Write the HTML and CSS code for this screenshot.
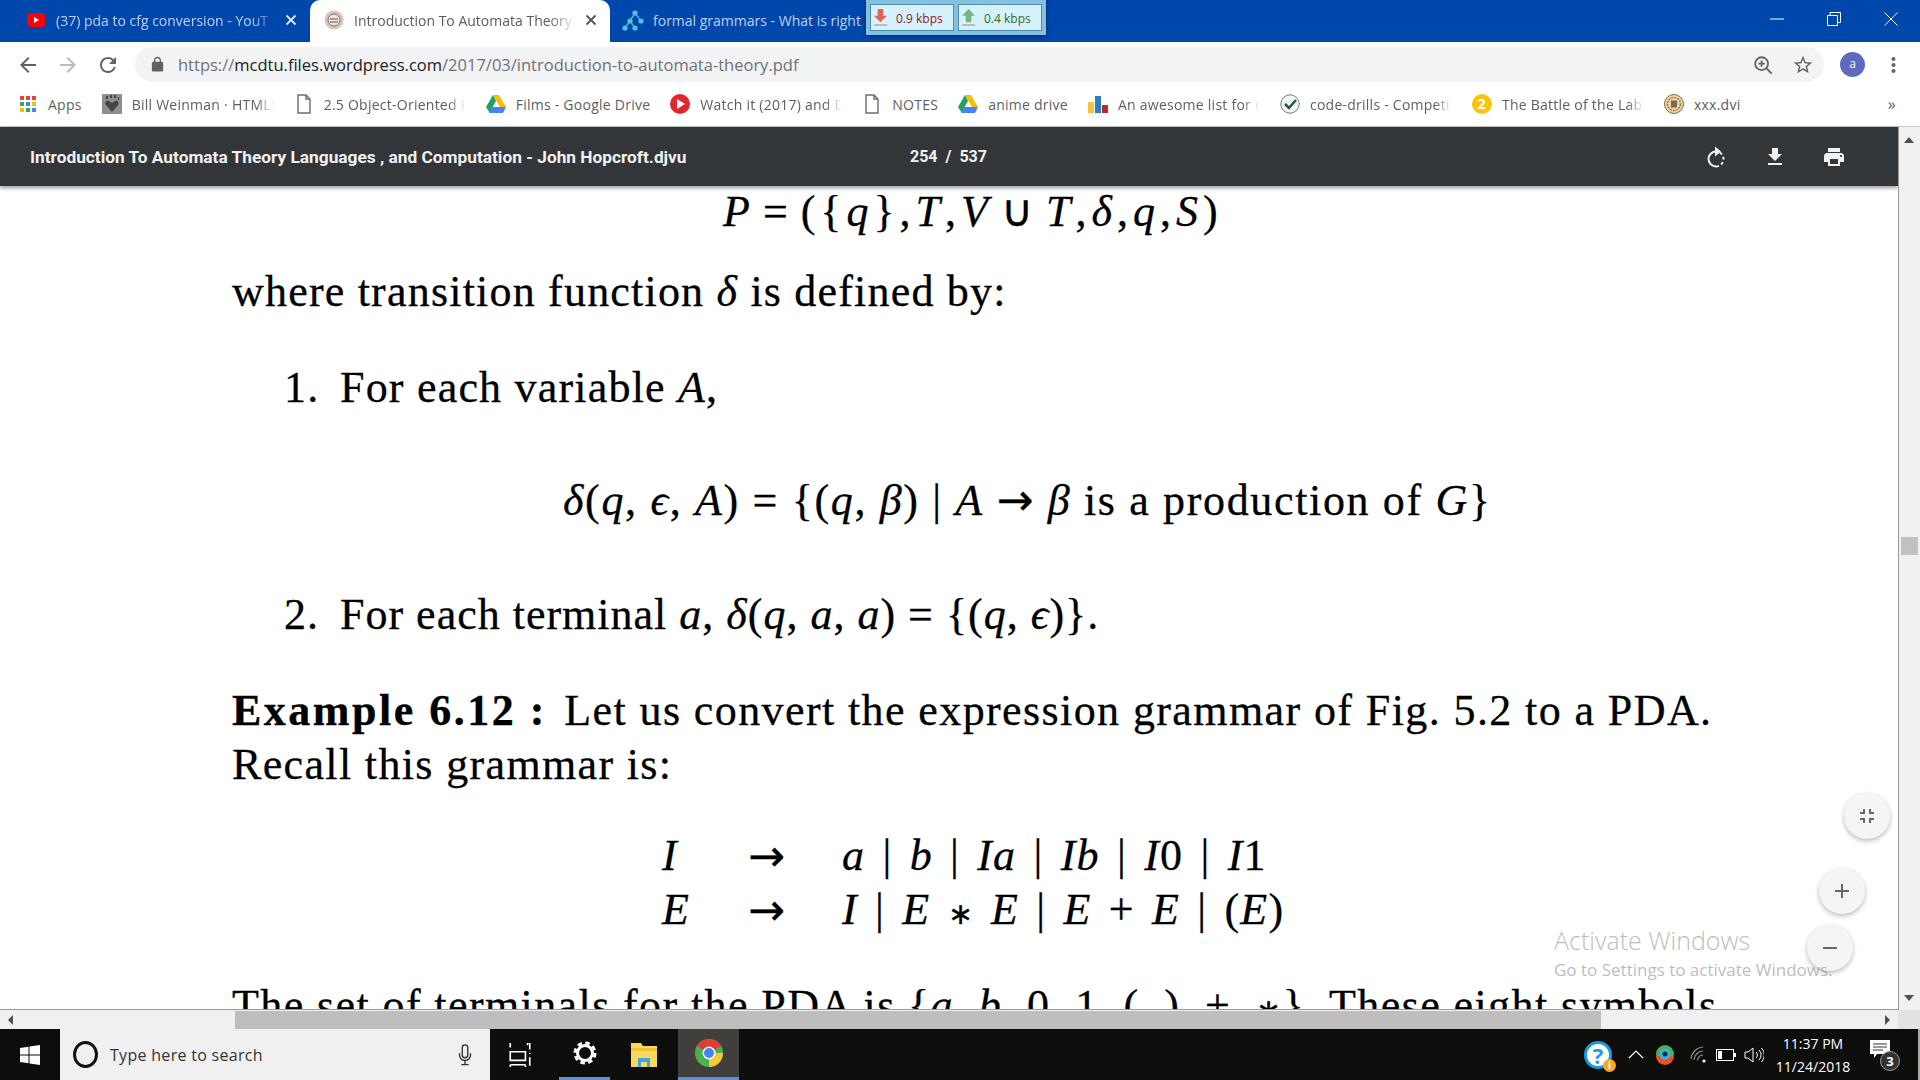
FILE: index.html
```html
<!DOCTYPE html>
<html lang="en">
<head>
    <meta charset="UTF-8">
    <title>Introduction To Automata Theory</title>
    <link rel="stylesheet" href="styles.css">
</head>
<body>
    <div class="tabstrip">
        <div class="tab tab-first">
            <svg class="tab-icon" viewBox="0 0 20 20"><rect x="1" y="3" width="18" height="14" rx="4" fill="#f00"/><path d="M8 7l5 3-5 3z" fill="#fff"/></svg>
            <span class="tab-title">(37) pda to cfg conversion - YouT</span>
            <svg class="tab-close" viewBox="0 0 12 12"><path d="M1.500 1.500l9 9M10.500 1.500l-9 9"/></svg>
        </div>
        <div class="tab tab-active">
            <svg class="tab-icon" viewBox="0 0 20 20"><circle cx="10" cy="10" r="9.500" fill="#d9c3bd"/><circle cx="10" cy="10" r="6" fill="#efe6e2" stroke="#8c6a66"/><path d="M6 9h8M6 12h8" stroke="#9a7c78" stroke-width="1.500"/></svg>
            <span class="tab-title">Introduction To Automata Theory</span>
            <svg class="tab-close" viewBox="0 0 12 12"><path d="M1.500 1.500l9 9M10.500 1.500l-9 9"/></svg>
        </div>
        <div class="tab tab-last">
            <svg class="tab-icon tab-icon-wide" viewBox="0 0 24 24"><path d="M13 5L8 13l-5 7M8 13l5 7M13 5l6 8" stroke="#3fb4d2" stroke-width="1.500" fill="none"/><circle cx="13" cy="5" r="2.600" fill="#4fc3e0"/><circle cx="8" cy="13" r="2.600" fill="#4fc3e0"/><circle cx="19" cy="13" r="2.600" fill="#4fc3e0"/><circle cx="3" cy="20" r="2.600" fill="#4fc3e0"/><circle cx="13" cy="20" r="2.600" fill="#4fc3e0"/></svg>
            <span class="tab-title">formal grammars - What is right</span>
        </div>
        <div class="window-btns">
            <svg class="win-btn" viewBox="0 0 14 14"><path d="M0 7h14"/></svg>
            <svg class="win-btn" viewBox="0 0 14 14"><path d="M.5 3.500h10v10H.5zM3 3.500V.5h10.500v10h-3"/></svg>
            <svg class="win-btn" viewBox="0 0 14 14"><path d="M.5.5l13 13M13.500.5l-13 13"/></svg>
        </div>
    </div>

    <div class="netspeed">
        <div class="net-box net-down">
            <svg class="net-arrow" viewBox="0 0 16 18"><path d="M5 0h6v7h4l-7 7-7-7h4z" fill="#e2635c"/><path d="M1 16h14v2H1z" fill="#b7b7b7"/></svg>
            <span>0.9 kbps</span>
        </div>
        <div class="net-box net-up">
            <svg class="net-arrow" viewBox="0 0 16 18"><path d="M5 14h6V7h4L8 0 1 7h4z" fill="#6fb97f"/><path d="M1 16h14v2H1z" fill="#b7b7b7"/></svg>
            <span>0.4 kbps</span>
        </div>
    </div>

    <div class="toolbar">
        <svg class="nav-icon" viewBox="0 0 24 24"><path fill="#5f6368" d="M20 11H7.830l5.590-5.590L12 4l-8 8 8 8 1.410-1.410L7.830 13H20v-2z"/></svg>
        <svg class="nav-icon" viewBox="0 0 24 24"><path fill="#b9bcc0" d="M4 11h12.170l-5.590-5.590L12 4l8 8-8 8-1.410-1.410L16.170 13H4v-2z"/></svg>
        <svg class="nav-icon" viewBox="0 0 24 24"><path fill="#5f6368" d="M17.650 6.350A7.958 7.958 0 0 0 12 4c-4.420 0-7.990 3.580-7.990 8s3.570 8 7.990 8c3.730 0 6.840-2.550 7.730-6h-2.080A5.990 5.990 0 0 1 12 18c-3.310 0-6-2.690-6-6s2.690-6 6-6c1.660 0 3.140.69 4.220 1.780L13 11h7V4l-2.350 2.350z"/></svg>
        <div class="omnibox">
            <svg class="lock" viewBox="0 0 24 24"><path fill="#5f6368" d="M18 8h-1V6c0-2.760-2.240-5-5-5S7 3.240 7 6v2H6c-1.100 0-2 .9-2 2v10c0 1.100.9 2 2 2h12c1.100 0 2-.9 2-2V10c0-1.100-.9-2-2-2zM9 6c0-1.660 1.340-3 3-3s3 1.340 3 3v2H9V6z"/></svg>
            <span class="url">https://<b>mcdtu.files.wordpress.com</b>/2017/03/introduction-to-automata-theory.pdf</span>
            <svg class="omni-icon" viewBox="0 0 24 24"><path fill="none" stroke="#5f6368" stroke-width="2" d="M10.500 3.500a7 7 0 1 0 0 14 7 7 0 0 0 0-14zM15.500 15.500l6 6M10.500 7v7M7 10.500h7"/></svg>
            <svg class="omni-icon" viewBox="0 0 24 24"><path fill="#5f6368" d="M22 9.240l-7.190-.62L12 2 9.190 8.630 2 9.240l5.460 4.730L5.820 21 12 17.270 18.180 21l-1.630-7.030L22 9.240zM12 15.400l-3.760 2.270 1-4.280-3.320-2.880 4.380-.38L12 6.100l1.710 4.040 4.380.38-3.320 2.880 1 4.280L12 15.400z"/></svg>
        </div>
        <div class="avatar">a</div>
        <svg class="menu-dots" viewBox="0 0 4 18"><circle cx="2" cy="3" r="2"/><circle cx="2" cy="9" r="2"/><circle cx="2" cy="15" r="2"/></svg>
    </div>

    <div class="bookmarks">
        <div class="bm">
            <svg class="bm-icon" viewBox="0 0 20 20"><rect x="2" y="2" width="4" height="4" fill="#ea4335"/><rect x="8" y="2" width="4" height="4" fill="#ea4335"/><rect x="14" y="2" width="4" height="4" fill="#ea4335"/><rect x="2" y="8" width="4" height="4" fill="#34a853"/><rect x="8" y="8" width="4" height="4" fill="#4285f4"/><rect x="14" y="8" width="4" height="4" fill="#fbbc05"/><rect x="2" y="14" width="4" height="4" fill="#fbbc05"/><rect x="8" y="14" width="4" height="4" fill="#34a853"/><rect x="14" y="14" width="4" height="4" fill="#4285f4"/></svg>
            <span>Apps</span>
        </div>
        <div class="bm">
            <svg class="bm-icon" viewBox="0 0 20 20"><rect width="20" height="20" fill="#8f8f8f"/><path d="M10 18L4 11c-2-3 1-5 3-4l3 2 3-2c2-1 5 1 3 4z" fill="#444"/><path d="M4 2h2v3H4zM8 1h2v3H8zM12 1h2v3h-2zM16 3h1v3h-1z" fill="#444"/></svg>
            <span class="bm-fade">Bill Weinman · HTML5</span>
        </div>
        <div class="bm">
            <svg class="bm-icon" viewBox="0 0 20 20"><path class="doc" d="M4 1h8l4 4v14H4zM12 1v4h4"/></svg>
            <span class="bm-fade">2.5 Object-Oriented P</span>
        </div>
        <div class="bm">
            <svg class="bm-icon" viewBox="0 0 20 20"><path d="M7 1h6l7 12h-6z" fill="#fbbc05"/><path d="M7 1l3 6-6.500 11.500L0 13z" fill="#1ea362"/><path d="M6 13h14l-3 6H3z" fill="#4285f4"/></svg>
            <span>Films - Google Drive</span>
        </div>
        <div class="bm">
            <svg class="bm-icon" viewBox="0 0 20 20"><circle cx="10" cy="10" r="10" fill="#e0272e"/><path d="M7 5l8 5-8 5z" fill="#fff"/></svg>
            <span class="bm-fade">Watch it (2017) and D</span>
        </div>
        <div class="bm">
            <svg class="bm-icon" viewBox="0 0 20 20"><path class="doc" d="M4 1h8l4 4v14H4zM12 1v4h4"/></svg>
            <span>NOTES</span>
        </div>
        <div class="bm">
            <svg class="bm-icon" viewBox="0 0 20 20"><path d="M7 1h6l7 12h-6z" fill="#fbbc05"/><path d="M7 1l3 6-6.500 11.500L0 13z" fill="#1ea362"/><path d="M6 13h14l-3 6H3z" fill="#4285f4"/></svg>
            <span>anime drive</span>
        </div>
        <div class="bm">
            <svg class="bm-icon" viewBox="0 0 20 20"><rect x="0" y="8" width="6" height="11" fill="#f7c23c"/><rect x="7" y="2" width="6" height="17" fill="#2b7fc3"/><rect x="14" y="11" width="6" height="8" fill="#c0272d"/></svg>
            <span class="bm-fade">An awesome list for c</span>
        </div>
        <div class="bm">
            <svg class="bm-icon" viewBox="0 0 20 20"><circle cx="10" cy="10" r="9.200" fill="#f3f6f8" stroke="#6d7a85"/><path d="M5 10l4 4 7-8" fill="none" stroke="#1e5c34" stroke-width="2.500"/></svg>
            <span class="bm-fade">code-drills - Competi</span>
        </div>
        <div class="bm">
            <svg class="bm-icon" viewBox="0 0 20 20"><circle cx="10" cy="10" r="10" fill="#fcc30b"/><text x="10" y="15" class="bm-num">2</text></svg>
            <span class="bm-fade">The Battle of the Laby</span>
        </div>
        <div class="bm">
            <svg class="bm-icon" viewBox="0 0 20 20"><circle cx="10" cy="10" r="9.500" fill="#e8d6b0" stroke="#8a6a3a"/><circle cx="10" cy="10" r="6.500" fill="none" stroke="#a5773c" stroke-width="1.500" stroke-dasharray="2 1"/><rect x="7" y="6.500" width="6" height="7" fill="#7c6a4a"/></svg>
            <span>xxx.dvi</span>
        </div>
        <span class="bm-more">»</span>
    </div>

    <div class="viewer">
        <div class="viewer-main">
            <div class="pdfbar">
                <span class="pdf-title">Introduction To Automata Theory Languages , and Computation - John Hopcroft.djvu</span>
                <span class="pdf-pages">254&nbsp; /&nbsp; 537</span>
                <div class="pdf-actions">
                    <svg class="pdf-icon" viewBox="0 0 24 24"><path d="M12 6.500a7.500 7.500 0 0 0 0 15" fill="none" stroke="#f1f1f1" stroke-width="2"/><path d="M12 21.500a7.500 7.500 0 0 0 0-15" fill="none" stroke="#f1f1f1" stroke-width="2" stroke-dasharray="3 2.500"/><path d="M11 1.500v10l6-5z" fill="#f1f1f1"/></svg>
                    <svg class="pdf-icon" viewBox="0 0 24 24"><path fill="#f1f1f1" d="M19 9h-4V3H9v6H5l7 7 7-7zM5 18v2h14v-2H5z"/></svg>
                    <svg class="pdf-icon" viewBox="0 0 24 24"><path fill="#f1f1f1" d="M19 8H5c-1.660 0-3 1.340-3 3v6h4v4h12v-4h4v-6c0-1.660-1.340-3-3-3zm-3 11H8v-5h8v5zm3-7c-.55 0-1-.45-1-1s.45-1 1-1 1 .45 1 1-.45 1-1 1zm-1-9H6v4h12V3z"/></svg>
                </div>
            </div>
            <div class="page">
                <p class="line eq-p"><i>P</i> = ({<i>q</i>},<i>T</i>,<i>V</i> ∪ <i>T</i>,<i>δ</i>,<i>q</i>,<i>S</i>)</p>
                <p class="line where">where transition function <i>δ</i> is defined by:</p>
                <p class="line item item-one"><span class="num">1.</span>For each variable <i>A</i>,</p>
                <p class="line eq-delta"><i>δ</i>(<i>q</i>, <i>ϵ</i>, <i>A</i>) = {(<i>q</i>, <i>β</i>) | <i>A</i> <span class="arr">→</span> <i>β</i> is a production of <i>G</i>}</p>
                <p class="line item item-two"><span class="num">2.</span>For each terminal <i>a</i>, <i>δ</i>(<i>q</i>, <i>a</i>, <i>a</i>) = {(<i>q</i>, <i>ϵ</i>)}.</p>
                <p class="line example"><b>Example 6.12 :</b> Let us convert the expression grammar of Fig. 5.2 to a PDA.</p>
                <p class="line recall">Recall this grammar is:</p>
                <div class="grammar">
                    <span class="line"><i>I</i></span><span class="line"><span class="arr">→</span></span><span class="line prod"><i>a</i> | <i>b</i> | <i>Ia</i> | <i>Ib</i> | <i>I</i>0 | <i>I</i>1</span>
                    <span class="line"><i>E</i></span><span class="line"><span class="arr">→</span></span><span class="line prod"><i>I</i> | <i>E</i> <span class="star">∗</span> <i>E</i> | <i>E</i> + <i>E</i> | (<i>E</i>)</span>
                </div>
                <p class="line terminals">The set of terminals for the PDA is {<i>a</i>, <i>b</i>, 0, 1, (, ), +, <span class="star">∗</span>}. These eight symbols</p>
            </div>
        </div>
        <div class="vscroll">
            <span class="arrow-up"></span>
            <span class="vthumb"></span>
            <span class="arrow-down"></span>
        </div>
    </div>

    <div class="hscroll">
        <span class="arrow-left"></span>
        <span class="hthumb"></span>
        <span class="arrow-right"></span>
        <span class="corner"></span>
    </div>

    <button class="fab fab-fit"><svg viewBox="0 0 24 24"><path fill="#666" d="M5 16h3v3h2v-5H5v2zm3-8H5v2h5V5H8v3zm6 11h2v-3h3v-2h-5v5zm2-11V5h-2v5h5V8h-3z"/></svg></button>
    <button class="fab fab-plus"><svg viewBox="0 0 24 24"><path fill="#666" d="M19 13h-6v6h-2v-6H5v-2h6V5h2v6h6z"/></svg></button>
    <button class="fab fab-minus"><svg viewBox="0 0 24 24"><path fill="#666" d="M5 11h14v2H5z"/></svg></button>

    <div class="watermark">
        <div class="wm-big">Activate Windows</div>
        <div class="wm-small">Go to Settings to activate Windows.</div>
    </div>

    <div class="taskbar">
        <div class="start">
            <svg class="start-logo" viewBox="0 0 20 20"><path fill="#fff" d="M0 3l8.500-1.200V9.500H0zM9.500 1.600L20 0v9.500H9.500zM0 10.500h8.500v7.700L0 17zM9.500 10.500H20V20L9.500 18.400z"/></svg>
        </div>
        <div class="search">
            <span class="cortana"></span>
            <span class="search-text">Type here to search</span>
            <svg class="mic" viewBox="0 0 16 24"><rect x="5" y="1" width="6" height="14" rx="3" fill="none" stroke="#333" stroke-width="1.500"/><path d="M2 10v2a6 6 0 0 0 12 0v-2M8 18v4M4 22.500h8" fill="none" stroke="#333" stroke-width="1.500"/></svg>
        </div>
        <div class="task-apps">
            <div class="task-app task-view">
                <svg class="app-icon" viewBox="0 0 22 24"><path d="M2 1v4M18 1v2M2 9h14v8H2zM2 21h14M2 21v2M16 21v2M20 1v6M20 10v1M20 14v8" fill="none" stroke="#fff" stroke-width="1.500"/></svg>
            </div>
            <div class="task-app task-open">
                <svg class="app-icon" viewBox="0 0 24 24"><circle cx="12" cy="12" r="7.500" fill="none" stroke="#fff" stroke-width="3"/><circle cx="12" cy="12" r="10" fill="none" stroke="#fff" stroke-width="3" stroke-dasharray="4.500 3.350"/></svg>
            </div>
            <div class="task-app task-folder">
                <svg class="app-icon app-folder" viewBox="0 0 28 26"><path d="M1 1h10l2 3h14v21H1z" fill="#fbd75b"/><path d="M1 6h26v3H1z" fill="#f0c23c"/><path d="M8 16h12v9h-3v-5h-6v5H8z" fill="#3aa7dd"/></svg>
            </div>
            <div class="task-app task-active">
                <svg class="app-icon app-chrome" viewBox="0 0 28 28"><circle cx="14" cy="14" r="14" fill="#4caf50"/><path d="M14 14L2 7a14 14 0 0 1 24 0z" fill="#e53935"/><path d="M14 14h14a14 14 0 0 1-14 14z" fill="#fcc934"/><circle cx="14" cy="14" r="6.500" fill="#fff"/><circle cx="14" cy="14" r="5" fill="#4285f4"/></svg>
            </div>
        </div>
        <div class="tray">
            <div class="tray-help">
                <span class="help-q">?</span>
                <span class="help-i">i</span>
            </div>
            <svg class="tray-caret" viewBox="0 0 16 9"><path d="M1 8l7-7 7 7" fill="none" stroke="#fff" stroke-width="1.200"/></svg>
            <svg class="tray-color" viewBox="0 0 20 20"><circle cx="10" cy="9" r="9" fill="#4caf50"/><path d="M1 11a9 9 0 0 0 18 0z" fill="#e8541c"/><circle cx="10" cy="9" r="5.500" fill="#35b4e8"/><circle cx="10" cy="9" r="2.500" fill="#0a2a44"/></svg>
            <svg class="tray-wifi" viewBox="0 0 18 18"><path d="M1 13A13 13 0 0 1 13 1M4 14a9.500 9.500 0 0 1 9-9M7.500 14.500A6 6 0 0 1 13 9" fill="none" stroke="#8a8a8a" stroke-width="1.200"/><circle cx="14" cy="15" r="1.600" fill="#fff"/></svg>
            <svg class="tray-batt" viewBox="0 0 20 12"><rect x=".5" y=".5" width="17" height="11" fill="none" stroke="#fff"/><rect x="2" y="2" width="4" height="8" fill="#fff"/><rect x="18" y="4" width="2" height="4" fill="#fff"/></svg>
            <svg class="tray-vol" viewBox="0 0 20 16"><path d="M1 5h3l5-4v14l-5-4H1zM12 5a4 4 0 0 1 0 6M15 3a7 7 0 0 1 0 10M17.500 1a10 10 0 0 1 0 14" fill="none" stroke="#fff" stroke-width="1"/></svg>
            <div class="clock">
                <div>11:37 PM</div>
                <div>11/24/2018</div>
            </div>
            <div class="notif">
                <svg class="notif-icon" viewBox="0 0 20 18"><path fill="#fff" d="M0 0h20v14H7l-3 4v-4H0z"/><path d="M3 4h14M3 7h14M3 10h10" stroke="#333"/></svg>
                <span class="notif-count">3</span>
            </div>
        </div>
    </div>
</body>
</html>
```

FILE: styles.css
```css
* {
    box-sizing: border-box;
}
html, body {
    margin: 0;
    height: 100%;
}
body {
    width: 1920px;
    height: 1080px;
    overflow: hidden;
    position: relative;
    display: flex;
    flex-direction: column;
    font-family: "Open Sans", Arial, sans-serif;
    background: #fff;
}

/* tabs */
.tabstrip {
    height: 42px;
    background: #0047ab;
    display: flex;
    flex: none;
}
.tab {
    display: flex;
    align-items: center;
    padding-bottom: 2px;
    font-size: 14px;
    color: #bfd0ea;
}
.tab-first {
    width: 310px;
    padding-left: 26px;
}
.tab-active {
    width: 300px;
    padding-left: 14px;
    background: #fff;
    color: #5b5b5b;
    border-radius: 10px 10px 0 0;
}
.tab-last {
    width: 257px;
    padding-left: 12px;
}
.tab-icon {
    width: 20px;
    height: 20px;
    flex: none;
}
.tab-icon-wide {
    width: 24px;
    height: 24px;
}
.tab-title {
    margin-left: 10px;
    width: 222px;
    white-space: nowrap;
    overflow: hidden;
    -webkit-mask-image: linear-gradient(90deg, #000 88%, transparent);
    mask-image: linear-gradient(90deg, #000 88%, transparent);
}
.tab-last .tab-title {
    width: 212px;
    margin-left: 7px;
    -webkit-mask-image: none;
    mask-image: none;
}
.tab-close {
    width: 12px;
    height: 12px;
    margin-left: 7px;
    fill: none;
    stroke: #dfe7f4;
    stroke-width: 1.8;
}
.tab-active .tab-close {
    margin-left: 9px;
    stroke: #555;
}
.window-btns {
    margin-left: auto;
    display: flex;
    gap: 43px;
    padding: 12px 22px 0 0;
}
.win-btn {
    width: 14px;
    height: 14px;
    fill: none;
    stroke: #fff;
    stroke-width: 1;
}

/* net speed widget */
.netspeed {
    position: absolute;
    left: 866px;
    top: 0;
    width: 180px;
    height: 35px;
    background: #84c1e0;
    padding: 4px;
    display: flex;
    gap: 4px;
    box-shadow: 0 1px 4px rgba(0, 0, 0, 0.45);
}
.net-box {
    flex: 1;
    height: 27px;
    background: #d6f2ff;
    border: 1px solid #4f8cb0;
    display: flex;
    align-items: center;
    gap: 8px;
    padding-left: 2px;
    font-size: 12px;
}
.net-box span {
    padding-top: 1px;
}
.net-down {
    color: #98131c;
}
.net-up {
    color: #2d6a1c;
}
.net-arrow {
    width: 15px;
    height: 17px;
}

/* address bar */
.toolbar {
    height: 40px;
    background: #fff;
    display: flex;
    align-items: center;
    padding: 5px 0 0 16px;
    flex: none;
}
.nav-icon {
    width: 24px;
    height: 24px;
    margin-right: 16px;
}
.omnibox {
    margin-left: -1px;
    width: 1689px;
    height: 35px;
    background: #f1f3f4;
    border-radius: 18px;
    display: flex;
    align-items: center;
    padding-left: 14px;
    padding-right: 10px;
}
.lock {
    width: 17px;
    height: 17px;
}
.url {
    margin-left: 12px;
    font-size: 16.5px;
    color: #6f7276;
    white-space: nowrap;
}
.url b {
    font-weight: 400;
    color: #202124;
}
.omni-icon {
    width: 22px;
    height: 22px;
    margin-left: 18px;
}
.url + .omni-icon {
    margin-left: auto;
}
.avatar {
    width: 25px;
    height: 25px;
    margin-left: 16px;
    border-radius: 50%;
    background: #5c6bc0;
    color: #fff;
    font-size: 12px;
    text-align: center;
    line-height: 24px;
}
.menu-dots {
    width: 5px;
    height: 18px;
    margin-left: 26px;
    fill: #5f6368;
}

/* bookmarks */
.bookmarks {
    height: 45px;
    background: #fff;
    display: flex;
    align-items: center;
    gap: 20px;
    padding-left: 18px;
    font-size: 14px;
    letter-spacing: 0.25px;
    color: #5b5f64;
    border-bottom: 1px solid #c9c9c9;
    flex: none;
}
.bm {
    display: flex;
    align-items: center;
    gap: 10px;
    white-space: nowrap;
}
.bm-icon {
    width: 20px;
    height: 20px;
    flex: none;
}
.bm-fade {
    width: 142px;
    overflow: hidden;
    -webkit-mask-image: linear-gradient(90deg, #000 88%, transparent);
    mask-image: linear-gradient(90deg, #000 88%, transparent);
}
.bm-num {
    font-size: 14px;
    font-weight: 700;
    fill: #fff;
    text-anchor: middle;
}
.doc {
    fill: none;
    stroke: #6b6f73;
    stroke-width: 1.4;
}
.bm-more {
    margin-left: auto;
    margin-right: 24px;
    font-size: 16px;
}

/* viewer: toolbar and page beside the scrollbar */
.viewer {
    height: 883px;
    display: flex;
    flex: none;
}
.viewer-main {
    flex: 1;
    min-width: 0;
    display: flex;
    flex-direction: column;
    border-bottom: 1px solid #9a9a9a;
}
.pdfbar {
    height: 59px;
    background: #323639;
    display: flex;
    align-items: center;
    position: relative;
    padding-left: 30px;
    color: #f1f1f1;
    font-family: Roboto, Arial, sans-serif;
    font-weight: 700;
    font-size: 16px;
    box-shadow: 0 2px 4px rgba(0, 0, 0, 0.4);
    z-index: 2;
    flex: none;
}
.pdf-title {
    width: 880px;
    font-size: 17.3px;
    white-space: nowrap;
}
.pdf-actions {
    margin-left: auto;
    display: flex;
    gap: 35px;
    padding-right: 52px;
}
.pdf-icon {
    width: 24px;
    height: 24px;
}

/* page */
.page {
    flex: 1;
    overflow: hidden;
    padding: 4px 0 0 232px;
    font-family: "Liberation Serif", "Times New Roman", serif;
    font-size: 44px;
    color: #000;
    -webkit-text-stroke: 0.3px #000;
}
.line {
    margin: 0;
    line-height: 44px;
    white-space: nowrap;
    letter-spacing: 1.2px;
}
.arr {
    font-family: "DejaVu Sans", sans-serif;
}
.star {
    font-size: 30px;
}
.eq-p {
    margin-left: 491px;
    letter-spacing: 5px;
    word-spacing: -8px;
}
.where {
    margin-top: 36px;
}
.item {
    margin-left: 52px;
}
.num {
    display: inline-block;
    width: 56px;
}
.item-one {
    margin-top: 52px;
}
.eq-delta {
    margin: 68px 0 0 331px;
    letter-spacing: 1.65px;
}
.item-two {
    margin-top: 70px;
    letter-spacing: 1px;
}
.example {
    margin-top: 52px;
    letter-spacing: 1.4px;
}
.example b {
    letter-spacing: 2.5px;
    margin-right: 5px;
}
.recall {
    margin-top: 10px;
    letter-spacing: 1.35px;
}
.grammar {
    margin: 47px 0 0 430px;
    display: grid;
    grid-template-columns: 86px 94px auto;
    row-gap: 9px;
}
.prod {
    word-spacing: 5px;
}
.terminals {
    margin-top: 48px;
    letter-spacing: 1.4px;
}

/* scrollbars */
.vscroll {
    width: 22px;
    background: #f1f1f1;
    border-left: 1px solid #9a9a9a;
    position: relative;
    z-index: 3;
}
.arrow-up, .arrow-down, .arrow-left, .arrow-right {
    position: absolute;
    width: 0;
    height: 0;
    border-style: solid;
}
.arrow-up {
    top: 10px;
    left: 5px;
    border-width: 0 5px 6px;
    border-color: transparent transparent #505050;
}
.arrow-down {
    bottom: 9px;
    left: 5px;
    border-width: 6px 5px 0;
    border-color: #505050 transparent transparent;
}
.vthumb {
    position: absolute;
    top: 410px;
    left: 2px;
    width: 17px;
    height: 18px;
    background: #c1c1c1;
}
.hscroll {
    height: 19px;
    background: #f0f0f0;
    position: relative;
    flex: none;
}
.hthumb {
    position: absolute;
    left: 235px;
    top: 1px;
    width: 1366px;
    height: 18px;
    background: #bebebe;
}
.arrow-left {
    left: 8px;
    top: 5px;
    border-width: 5px 5px 5px 0;
    border-color: transparent #505050 transparent transparent;
}
.arrow-right {
    left: 1885px;
    top: 5px;
    border-width: 5px 0 5px 5px;
    border-color: transparent transparent transparent #505050;
}
.corner {
    position: absolute;
    right: 0;
    top: 0;
    width: 22px;
    height: 19px;
    background: #e2e2e2;
}

/* floating buttons */
.fab {
    position: absolute;
    width: 46px;
    height: 46px;
    padding: 11px;
    border: none;
    border-radius: 50%;
    background: #f5f5f5;
    box-shadow: 0 2px 5px rgba(0, 0, 0, 0.28);
}
.fab svg {
    display: block;
    width: 24px;
    height: 24px;
}
.fab-fit {
    left: 1844px;
    top: 793px;
}
.fab-plus {
    left: 1819px;
    top: 868px;
}
.fab-minus {
    left: 1807px;
    top: 925px;
}
.watermark {
    position: absolute;
    left: 1554px;
    top: 922px;
    color: rgba(120, 120, 120, 0.5);
    white-space: nowrap;
}
.wm-big {
    font-size: 25px;
    font-weight: 300;
    line-height: 36px;
}
.wm-small {
    font-size: 17px;
    line-height: 24px;
}

/* windows taskbar */
.taskbar {
    height: 51px;
    background: #0d0d0b;
    display: flex;
    color: #fff;
    flex: none;
}
.start {
    width: 60px;
    display: flex;
    align-items: center;
    justify-content: center;
}
.start-logo {
    width: 20px;
    height: 20px;
}
.search {
    width: 430px;
    background: #f0f0f0;
    display: flex;
    align-items: center;
    padding-left: 13px;
    color: #333;
    font-size: 16px;
    letter-spacing: 0.3px;
}
.cortana {
    width: 25px;
    height: 27px;
    border: 3px solid #111;
    border-radius: 50%;
}
.search-text {
    margin-left: 12px;
}
.mic {
    width: 16px;
    height: 22px;
    margin-left: auto;
    margin-right: 17px;
}
.task-apps {
    display: flex;
}
.task-app {
    display: flex;
    align-items: center;
    justify-content: center;
}
.task-view {
    width: 69px;
    padding-right: 9px;
}
.task-open {
    width: 51px;
    border-bottom: 3px solid #5b8fd6;
}
.task-folder {
    width: 68px;
}
.task-active {
    width: 61px;
    background: #403f3c;
    border-bottom: 3px solid #5b8fd6;
}
.app-icon {
    width: 24px;
    height: 26px;
}
.app-folder {
    width: 28px;
}
.app-chrome {
    width: 28px;
    height: 28px;
}
.tray {
    margin-left: auto;
    display: flex;
    align-items: center;
    padding-right: 16px;
    border-right: 2px solid #aaa;
}
.tray-help {
    width: 28px;
    height: 28px;
    border-radius: 50%;
    background: #fff;
    border: 3px solid #1a9ae0;
    color: #1a9ae0;
    font: 700 22px/22px "Open Sans", sans-serif;
    text-align: center;
    position: relative;
}
.help-i {
    position: absolute;
    right: -7px;
    bottom: -6px;
    width: 13px;
    height: 13px;
    border-radius: 50%;
    background: #f9a825;
    color: #fff;
    font-size: 10px;
    line-height: 13px;
}
.tray-caret {
    width: 16px;
    height: 9px;
    margin-left: 16px;
}
.tray-color {
    width: 20px;
    height: 20px;
    margin-left: 11px;
}
.tray-wifi {
    width: 18px;
    height: 18px;
    margin-left: 15px;
}
.tray-batt {
    width: 20px;
    height: 12px;
    margin-left: 8px;
}
.tray-vol {
    width: 20px;
    height: 16px;
    margin-left: 8px;
}
.clock {
    width: 78px;
    margin-left: 10px;
    text-align: center;
    font-size: 14px;
    line-height: 23px;
}
.notif {
    position: relative;
    width: 32px;
    height: 30px;
    margin-left: 18px;
}
.notif-icon {
    width: 20px;
    height: 18px;
}
.notif-count {
    position: absolute;
    left: 10px;
    top: 11px;
    width: 20px;
    height: 20px;
    border-radius: 50%;
    background: #333;
    border: 1px solid #999;
    font-size: 13px;
    font-weight: 700;
    line-height: 18px;
    text-align: center;
}
```
